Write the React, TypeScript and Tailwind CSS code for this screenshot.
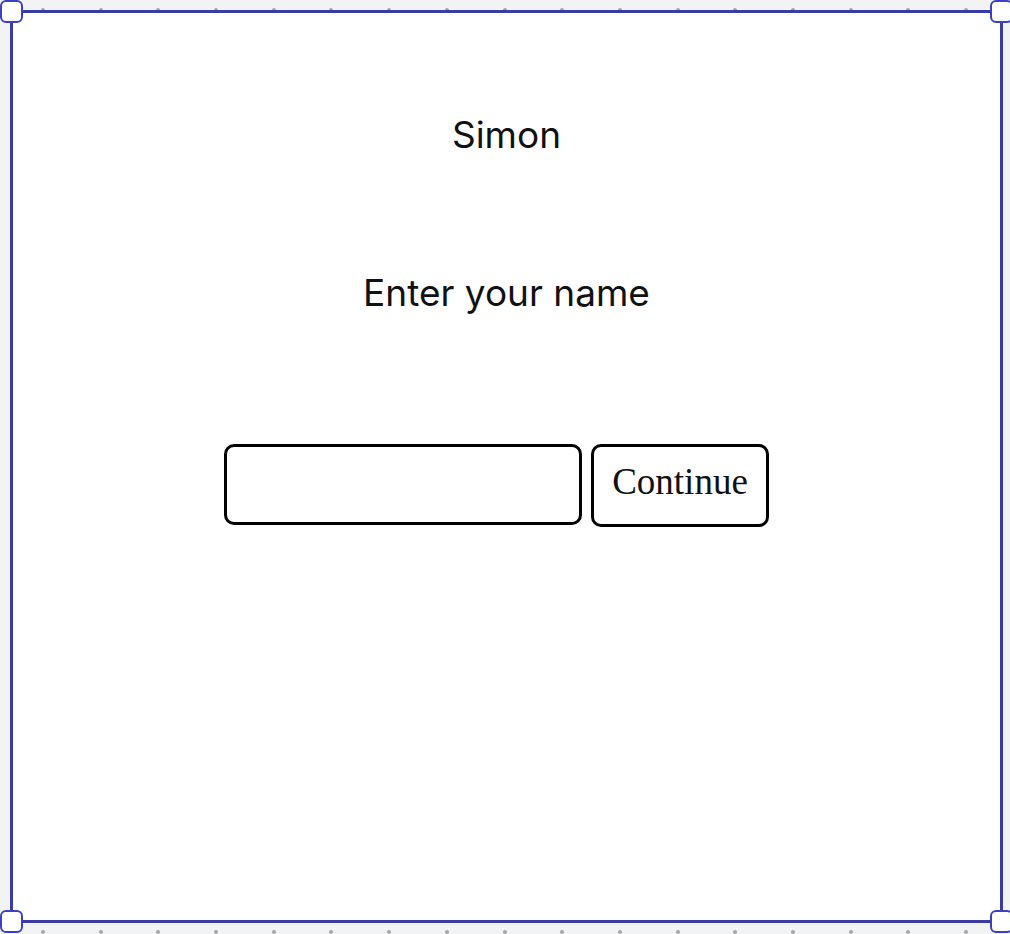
const dots = Array.from({ length: 17 }, (_, i) => i);

function DotRow({ className }: { className: string }) {
  return (
    <div aria-hidden="true" className={`absolute inset-x-0 flex justify-between pr-[42px] pl-[41px] ${className}`}>
      {dots.map((dot) => (
        <span key={dot} className="size-1 rounded-full bg-[#a5a6a8]" />
      ))}
    </div>
  );
}

function Handle({ className }: { className: string }) {
  return (
    <span
      aria-hidden="true"
      className={`absolute size-[23px] rounded-md border-2 border-[#3c40c8] bg-white ${className}`}
    />
  );
}

export default function App() {
  return (
    <div className="relative flex min-h-screen overflow-hidden bg-[#f1f3f5] pt-[10px] pr-[7px] pb-[11px] pl-[10px] text-[37px] leading-[46px] text-[#111111]">
      <DotRow className="top-2" />
      <DotRow className="bottom-0" />
      <main className="relative flex-1 border-3 border-[#3a3ca6] bg-white">
        <div className="flex flex-col items-center pt-[99px] font-['Inter',sans-serif]">
          <h1>Simon</h1>
          <label htmlFor="name" className="mt-28">
            Enter your name
          </label>
        </div>
        <form
          className="mt-32 flex items-start justify-center gap-[9px] pr-5"
          onSubmit={(event) => event.preventDefault()}
        >
          <input
            id="name"
            type="text"
            className="h-[81px] w-[358px] rounded-[10px] border-3 border-black bg-white px-4 outline-none"
          />
          <button
            type="submit"
            className="rounded-[10px] border-3 border-black bg-white px-[18px] pt-3 pb-[19px] font-['Liberation_Serif',serif]"
          >
            Continue
          </button>
        </form>
        <Handle className="-top-[13px] -left-[13px]" />
        <Handle className="-top-[13px] -right-[13px]" />
        <Handle className="-bottom-[13px] -left-[13px]" />
        <Handle className="-right-[13px] -bottom-[13px]" />
      </main>
    </div>
  );
}
